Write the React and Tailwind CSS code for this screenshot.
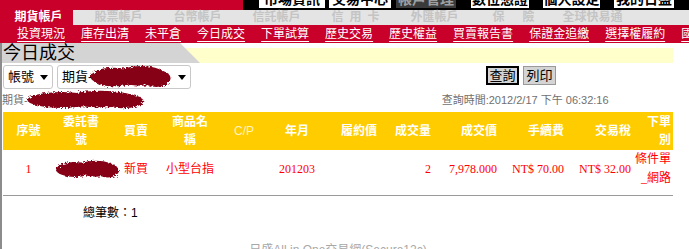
import { useId } from 'react';

const topMenu = [
  { label: '市場資訊', cls: 'ml-[16px] w-[66px] bg-white text-black' },
  { label: '交易中心', cls: 'ml-[4px] w-[62px] bg-white text-black' },
  { label: '帳戶管理', cls: 'ml-[5px] w-[60px] bg-[#3a3a3a] text-[#a0a0a0]' },
  { label: '數位憑證', cls: 'ml-[15px] w-[58px] bg-white text-black' },
  { label: '個人設定', cls: 'ml-[14px] w-[57px] bg-white text-black' },
  { label: '我的日盛', cls: 'ml-[14px] w-[60px] bg-white text-black' },
];

const accountTabs = ['股票帳戶', '台幣帳戶', '信託帳戶', '信\u2002用\u2002卡', '外匯帳戶', '保\u3000\u2002險', '全球快易通'];

const subLinks = ['投資現況', '庫存出清', '未平倉', '今日成交', '下單試算', '歷史交易', '歷史權益', '買賣報告書', '保證金追繳', '選擇權履約', '國外期貨'];

// column layout shared by header and rows
const cols = 'grid grid-cols-[51px_54px_56px_52px_56px_50px_57px_54px_66px_67px_67px_40px] w-[670px]';

function Scribble({ w, h }) {
  const id = useId().replace(/:/g, '');
  return (
    <svg width={w} height={h} viewBox={`0 0 ${w} ${h}`} className="inline-block align-middle">
      <defs>
        <filter id={`r${id}`}>
          <feTurbulence type="fractalNoise" baseFrequency="0.6" numOctaves="2" seed="3" />
          <feDisplacementMap in="SourceGraphic" scale="5" />
        </filter>
      </defs>
      <g fill="#860019" filter={`url(#r${id})`}>
        <ellipse cx={w * 0.3} cy={h * 0.5} rx={w * 0.28} ry={h * 0.36} />
        <ellipse cx={w * 0.62} cy={h * 0.46} rx={w * 0.3} ry={h * 0.38} />
        <ellipse cx={w * 0.8} cy={h * 0.55} rx={w * 0.17} ry={h * 0.33} />
      </g>
    </svg>
  );
}

function Caret() {
  return (
    <svg width="8" height="5" viewBox="0 0 8 5" className="shrink-0">
      <path d="M0 0h8L4 5z" fill="#000" />
    </svg>
  );
}

export default function App() {
  return (
    <div className="w-[689px] h-[249px] overflow-hidden bg-white font-['Liberation_Sans','Noto_Sans_CJK_TC',sans-serif]">
      {/* top site menu, mostly cut off */}
      <div className="flex h-[10px] overflow-hidden">
        <div className="w-[243px] bg-[#c8002a]" />
        <div className="flex-1 flex items-start bg-black">
          {topMenu.map((m) => (
            <div key={m.label} className={`h-[8px] overflow-hidden text-center text-[14px] font-bold leading-[14px] ${m.cls}`}>
              <div className="-mt-[8px]">{m.label}</div>
            </div>
          ))}
        </div>
      </div>

      {/* account tabs */}
      <div className="flex h-[15px] bg-[#e4e4e4] text-[12px] font-bold leading-[15px] whitespace-nowrap">
        <div className="w-[73px] pl-[4px] bg-[#c8002a]">
          <div className="text-center text-white">期貨帳戶</div>
        </div>
        <div className="w-[6px]" />
        {accountTabs.map((t) => (
          <div key={t} className="w-[79px] shrink-0 text-center text-[#c4c4c4]">{t}</div>
        ))}
      </div>

      {/* sub links */}
      <div className="flex h-[18px] items-center gap-[16px] overflow-hidden whitespace-nowrap bg-[#c8002a] pl-[17px] text-[12px] leading-[14px] text-white">
        {subLinks.map((l) => (
          <a key={l} href="#" className="underline underline-offset-[3px]">{l}</a>
        ))}
      </div>

      <div className="border-l-[2px] border-[#8c8c8c] h-[206px]">
        {/* page title */}
        <div className="flex h-[20px]">
          <div className="relative z-10 w-[198px] shrink-0 bg-[#d4d4d4] pl-[1px] text-[18px] leading-[20px] text-black [clip-path:polygon(0_0,178px_0,198px_100%,0_100%)]">
            今日成交
          </div>
          <div className="-ml-[15px] mt-[5px] h-[15px] w-[488px] bg-[#ffffcc]" />
        </div>

        {/* filters */}
        <div className="flex items-start pl-[1px] pt-[2px] h-[26px]">
          <div className="flex h-[24px] w-[50px] items-center justify-between rounded-[3px] border border-[#c8c8c8] pl-[4px] pr-[4px] text-[13px]">
            <span>帳號</span>
            <Caret />
          </div>
          <div className="ml-[4px] flex h-[24px] w-[134px] items-center rounded-[3px] border border-[#c8c8c8] pl-[4px] pr-[4px] text-[13px]">
            <span>期貨-</span>
            <span className="-ml-[3px] -my-[4px]"><Scribble w={84} h={26} /></span>
            <span className="ml-auto"><Caret /></span>
          </div>
          <div className="ml-[295px] mt-[1px] flex gap-[4px] text-[13px] leading-[15px]">
            <button className="h-[19px] w-[33px] border-2 border-black bg-[#d4d4d4]">查詢</button>
            <button className="h-[19px] w-[33px] border border-[#999] bg-[#d4d4d4]">列印</button>
          </div>
        </div>

        <div className="flex h-[22px] items-center text-[11px] text-[#707070]">
          <span>期貨-</span>
          <span className="-ml-[3px] -my-[4px]"><Scribble w={122} h={22} /></span>
          <span className="ml-[295px]">查詢時間:2012/2/17 下午 06:32:16</span>
        </div>

        {/* table */}
        <div className="ml-[1px] mt-[1px]">
          <div className={`${cols} h-[38px] items-center bg-[#ffcc00] text-[12px] font-bold leading-[18px] text-white`}>
            <div className="text-center">序號</div>
            <div className="text-center">委託書<br />號</div>
            <div className="text-center">買賣</div>
            <div className="text-center">商品名<br />稱</div>
            <div className="text-center font-normal text-[#fff3c0]">C/P</div>
            <div className="text-center">年月</div>
            <div className="pr-[2px] text-right">履約價</div>
            <div className="pr-[2px] text-right">成交量</div>
            <div className="pr-[2px] text-right">成交價</div>
            <div className="pr-[2px] text-right">手續費</div>
            <div className="pr-[2px] text-right">交易稅</div>
            <div className="pr-[2px] text-right">下單<br />別</div>
          </div>
          <div className={`${cols} h-[36px] items-center font-['Liberation_Serif','Noto_Sans_CJK_TC',serif] text-[12px] leading-[19px] text-[#ff0000]`}>
            <div className="text-center">1</div>
            <div className="pl-[1px]"><Scribble w={66} h={21} /></div>
            <div className="text-center">新買</div>
            <div className="text-center">小型台指</div>
            <div />
            <div className="text-center">201203</div>
            <div />
            <div className="pr-[2px] text-right">2</div>
            <div className="pr-[2px] text-right">7,978.000</div>
            <div className="pr-[2px] text-right">NT$ 70.00</div>
            <div className="pr-[2px] text-right">NT$ 32.00</div>
            <div className="pr-[2px] text-right whitespace-nowrap">條件單<br />_網路</div>
          </div>
          <div className="mt-[9px] h-px w-[670px] bg-[#9a9a9a]" />
          <div className="mt-[10px] pl-[80px] text-[12px] leading-[14px] text-black">總筆數：1</div>
          <div className="mt-[23px] w-[670px] text-center text-[12px] leading-[14px] text-[#a8a8a8]">
            日盛All in One交易網(Secure12c)
          </div>
        </div>
      </div>
    </div>
  );
}
